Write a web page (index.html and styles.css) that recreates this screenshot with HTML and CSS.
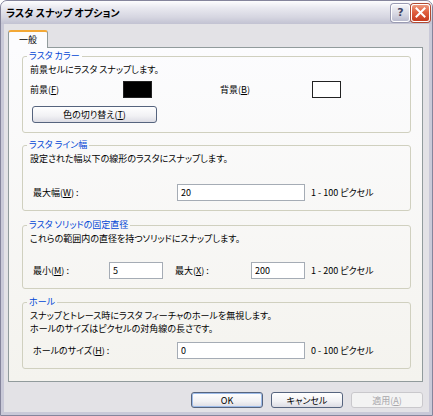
FILE: index.html
```html
<!DOCTYPE html>
<html lang="ja">
<head>
    <meta charset="UTF-8">
    <title>ラスタ スナップ オプション</title>
    <link rel="stylesheet" href="styles.css">
</head>
<body>
    <div class="window">
        <div class="titlebar">
            <span class="title">ラスタ スナップ オプション</span>
            <div class="caption-buttons">
                <span class="cap help">?</span>
                <span class="cap close">
                    <svg width="11" height="11" viewBox="0 0 11 11">
                        <path d="M1.5 1.5 L9.5 9.5 M9.5 1.5 L1.5 9.5" stroke="#fff" stroke-width="2" stroke-linecap="square"/>
                    </svg>
                </span>
            </div>
        </div>

        <div class="client">
            <div class="tabs">
                <div class="tab active">一般</div>
            </div>

            <div class="panel">
                <fieldset class="group g-color">
                    <legend>ラスタ カラー</legend>
                    <p class="desc">前景セルにラスタ スナップします。</p>
                    <div class="color-row">
                        <span class="fg-label">前景(<u>F</u>)</span>
                        <span class="swatch black"></span>
                        <span class="bg-label">背景(<u>B</u>)</span>
                        <span class="swatch white"></span>
                    </div>
                    <button class="btn swap">色の切り替え(<u>T</u>)</button>
                </fieldset>

                <fieldset class="group g-width">
                    <legend>ラスタ ライン幅</legend>
                    <p class="desc">設定された幅以下の線形のラスタにスナップします。</p>
                    <div class="row">
                        <label class="label wide">最大幅(<u>W</u>) :</label>
                        <input class="field long" type="text" value="20">
                        <span class="unit">1 - 100 ピクセル</span>
                    </div>
                </fieldset>

                <fieldset class="group g-solid">
                    <legend>ラスタ ソリッドの固定直径</legend>
                    <p class="desc">これらの範囲内の直径を持つソリッドにスナップします。</p>
                    <div class="row">
                        <label class="label min">最小(<u>M</u>) :</label>
                        <input class="field short" type="text" value="5">
                        <label class="label max">最大(<u>X</u>) :</label>
                        <input class="field short" type="text" value="200">
                        <span class="unit">1 - 200 ピクセル</span>
                    </div>
                </fieldset>

                <fieldset class="group g-hole">
                    <legend>ホール</legend>
                    <p class="desc two-line">スナップとトレース時にラスタ フィーチャのホールを無視します。<br>ホールのサイズはピクセルの対角線の長さです。</p>
                    <div class="row">
                        <label class="label wide">ホールのサイズ(<u>H</u>) :</label>
                        <input class="field long" type="text" value="0">
                        <span class="unit">0 - 100 ピクセル</span>
                    </div>
                </fieldset>
            </div>

            <div class="actions">
                <button class="btn default">OK</button>
                <button class="btn">キャンセル</button>
                <button class="btn" disabled>適用(<u>A</u>)</button>
            </div>
        </div>
    </div>
</body>
</html>
```

FILE: styles.css
```css
body {
    margin: 0;
    font-family: "Noto Sans CJK JP", sans-serif;
    font-size: 9px;
    font-feature-settings: "palt";
    color: #000;
}
u {
    text-underline-offset: 1px;
}

/* window frame */
.window {
    width: 433px;
    height: 416px;
    box-sizing: border-box;
    border: 1px solid #85859c;
    border-radius: 7px 7px 0 0;
    background: #c9c9d8;
    display: flex;
    flex-direction: column;
    overflow: hidden;
}
.titlebar {
    height: 23px;
    flex: none;
    display: flex;
    align-items: center;
    justify-content: space-between;
    padding: 0 2px 0 5px;
    background: linear-gradient(#fdfdfe, #e9e9f0 30%, #d6d6e1 70%, #c2c2d2);
}
.title {
    font-size: 10px;
    font-weight: bold;
    color: #000;
}
.caption-buttons {
    display: flex;
    gap: 1px;
}
.cap {
    width: 19px;
    height: 18px;
    box-sizing: border-box;
    border: 1px solid #fff;
    border-radius: 3px;
    display: flex;
    align-items: center;
    justify-content: center;
}
.help {
    background: linear-gradient(#f4f4f8, #cfd0dd 70%, #b9bbce);
    color: #3f4566;
    font-family: "DejaVu Sans", sans-serif;
    font-weight: bold;
    font-size: 11px;
    box-shadow: 0 0 0 1px #9a9bb2;
}
.close {
    background: linear-gradient(#ee9a7f, #df5f3f 45%, #c73a1e);
    box-shadow: 0 0 0 1px #b04a33;
}

.client {
    flex: 1;
    margin: 0 3px 3px;
    padding: 6px 6px 4px 4px;
    background: #e3e2e6;
    display: flex;
    flex-direction: column;
}

/* tab strip */
.tabs {
    display: flex;
    height: 17px;
}
.tab {
    width: 40px;
    height: 18px;
    box-sizing: border-box;
    border: 1px solid #919b9c;
    border-bottom: none;
    border-top: 2px solid #f3a836;
    border-radius: 3px 3px 0 0;
    background: #fcfcfe;
    text-align: center;
    line-height: 16px;
    position: relative;
    z-index: 1;
}

.panel {
    height: 335px;
    box-sizing: border-box;
    border: 1px solid #919b9c;
    background: linear-gradient(#fcfcfe, #f4f3ee);
    padding: 2px 11px 0 13px;
}

/* group boxes */
.group {
    margin: 0;
    padding: 2px 7px 9px;
    border: 1px solid #d0d0bf;
    border-radius: 3px;
    min-width: 0;
}
.g-width {
    margin-top: 6px;
}
.g-solid {
    margin-top: 8px;
}
.g-hole {
    margin-top: 7px;
}
.group legend {
    padding: 0 2px;
    margin-left: -3px;
    line-height: 12px;
    color: #0046d5;
}
.desc {
    margin: 0;
    line-height: 12px;
}
.desc.two-line {
    line-height: 13px;
    margin-top: -1px;
}

.color-row {
    display: flex;
    align-items: center;
    height: 17px;
    margin-top: 5px;
}
.fg-label {
    width: 93px;
}
.bg-label {
    width: 92px;
    margin-left: 68px;
}
.swatch {
    width: 29px;
    height: 17px;
    box-sizing: border-box;
    border: 1px solid #222;
}
.swatch.black {
    background: #000;
}
.swatch.white {
    background: #fff;
}

.row {
    display: flex;
    align-items: center;
    height: 17px;
}
.g-width .row {
    margin-top: 19px;
}
.g-solid .row {
    margin-top: 17px;
}
.g-hole .row {
    margin-top: 7px;
}
.label {
    box-sizing: border-box;
    padding-left: 3px;
}
.label.wide {
    width: 147px;
}
.label.min {
    width: 79px;
}
.label.max {
    width: 76px;
    margin-left: 12px;
    padding-left: 0;
}
.field {
    height: 17px;
    box-sizing: border-box;
    border: 1px solid #a5acb5;
    background: #fff;
    padding: 0 3px;
    font: inherit;
    color: #000;
}
.field.long {
    width: 128px;
}
.field.short {
    width: 54px;
}
.unit {
    margin-left: 6px;
}

/* push buttons */
.btn {
    height: 17px;
    box-sizing: border-box;
    border: 1px solid #56647e;
    border-radius: 3px;
    background: linear-gradient(#ffffff, #f1f1f4 60%, #dcdce4);
    font: inherit;
    font-feature-settings: "palt";
    color: #000;
    padding: 0;
}
.btn.swap {
    width: 125px;
    margin: 8px 0 0 2px;
}
.actions {
    display: flex;
    justify-content: flex-end;
    gap: 8px;
    margin-top: 10px;
}
.actions .btn {
    width: 72px;
    height: 16px;
}
.btn.default {
    box-shadow: inset 0 0 0 1px #9dbbe9;
}
.btn:disabled {
    border-color: #c9c8cc;
    background: #f3f3f3;
    color: #a8a7ab;
}
```
